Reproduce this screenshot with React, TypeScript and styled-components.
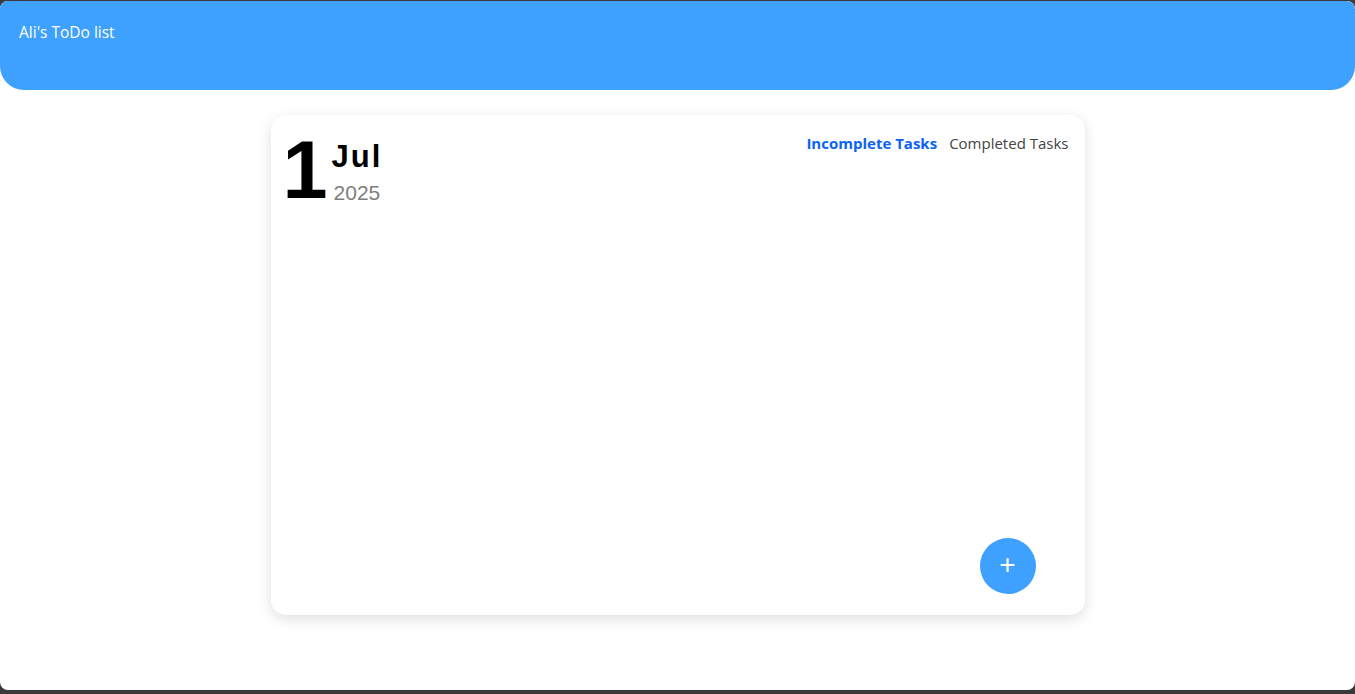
import React from "react";
import styled, { createGlobalStyle } from "styled-components";

const Global = createGlobalStyle`
  html, body { margin: 0; padding: 0; background: #3a3a3a; }
  body { font-family: "Open Sans", "Noto Sans", sans-serif; }
  * { box-sizing: border-box; }
`;

const Page = styled.div`
  margin-top: 1px;
  height: 689px;
  background: #ffffff;
  border-radius: 8px;
  overflow: hidden;
  display: flex;
  flex-direction: column;
  align-items: center;
`;

const Header = styled.header`
  align-self: stretch;
  height: 89px;
  background: #3ea1ff;
  border-radius: 0 8px 24px 24px;
  padding: 21px 19px;
  color: #ffffff;
  font-size: 15.5px;
  line-height: 20px;
`;

const Card = styled.main`
  margin-top: 25px;
  width: 814px;
  height: 500px;
  background: #ffffff;
  border-radius: 15px;
  box-shadow: 0 4px 14px rgba(0, 0, 0, 0.13);
  padding: 15px 16px 21px 12px;
  display: flex;
  flex-direction: column;
`;

const TopRow = styled.div`
  display: flex;
  justify-content: space-between;
  align-items: flex-start;
`;

const DateBlock = styled.div`
  display: flex;
  align-items: center;
  font-family: "Liberation Sans", Arial, sans-serif;
`;

const Day = styled.div`
  font-size: 81px;
  font-weight: 700;
  line-height: 1;
  color: #000;
`;

const MonthYear = styled.div`
  display: flex;
  flex-direction: column;
  margin-left: 4px;
  margin-top: 6px;
`;

const Month = styled.div`
  font-size: 31px;
  font-weight: 700;
  letter-spacing: 2px;
  line-height: 34px;
  color: #000;
`;

const Year = styled.div`
  font-size: 21px;
  color: #7d7d7d;
  line-height: 28px;
  margin-top: 5px;
  margin-left: 2px;
`;

const Tabs = styled.nav`
  display: flex;
  gap: 12px;
  margin-top: 3px;
`;

const Tab = styled.button<{ $active?: boolean }>`
  border: none;
  background: none;
  padding: 0;
  font-family: "Open Sans", "Noto Sans", sans-serif;
  font-size: 15px;
  line-height: 20px;
  cursor: pointer;
  font-weight: ${(p) => (p.$active ? 700 : 400)};
  color: ${(p) => (p.$active ? "#0b63f6" : "#444")};
`;

const Spacer = styled.div`
  flex: 1;
`;

const BottomRow = styled.div`
  display: flex;
  justify-content: flex-end;
  padding-right: 33px;
`;

const AddButton = styled.button`
  width: 56px;
  height: 56px;
  border-radius: 50%;
  border: none;
  background: #3ea1ff;
  color: #fff;
  font-size: 28px;
  font-weight: 400;
  line-height: 1;
  padding: 0 0 2px;
  display: flex;
  align-items: center;
  justify-content: center;
  cursor: pointer;
  font-family: "Liberation Sans", Arial, sans-serif;
`;

export default function App() {
  return (
    <>
      <Global />
      <Page>
        <Header>Ali's ToDo list</Header>
        <Card>
          <TopRow>
            <DateBlock>
              <Day>1</Day>
              <MonthYear>
                <Month>Jul</Month>
                <Year>2025</Year>
              </MonthYear>
            </DateBlock>
            <Tabs>
              <Tab $active>Incomplete Tasks</Tab>
              <Tab>Completed Tasks</Tab>
            </Tabs>
          </TopRow>
          <Spacer />
          <BottomRow>
            <AddButton>+</AddButton>
          </BottomRow>
        </Card>
      </Page>
    </>
  );
}
